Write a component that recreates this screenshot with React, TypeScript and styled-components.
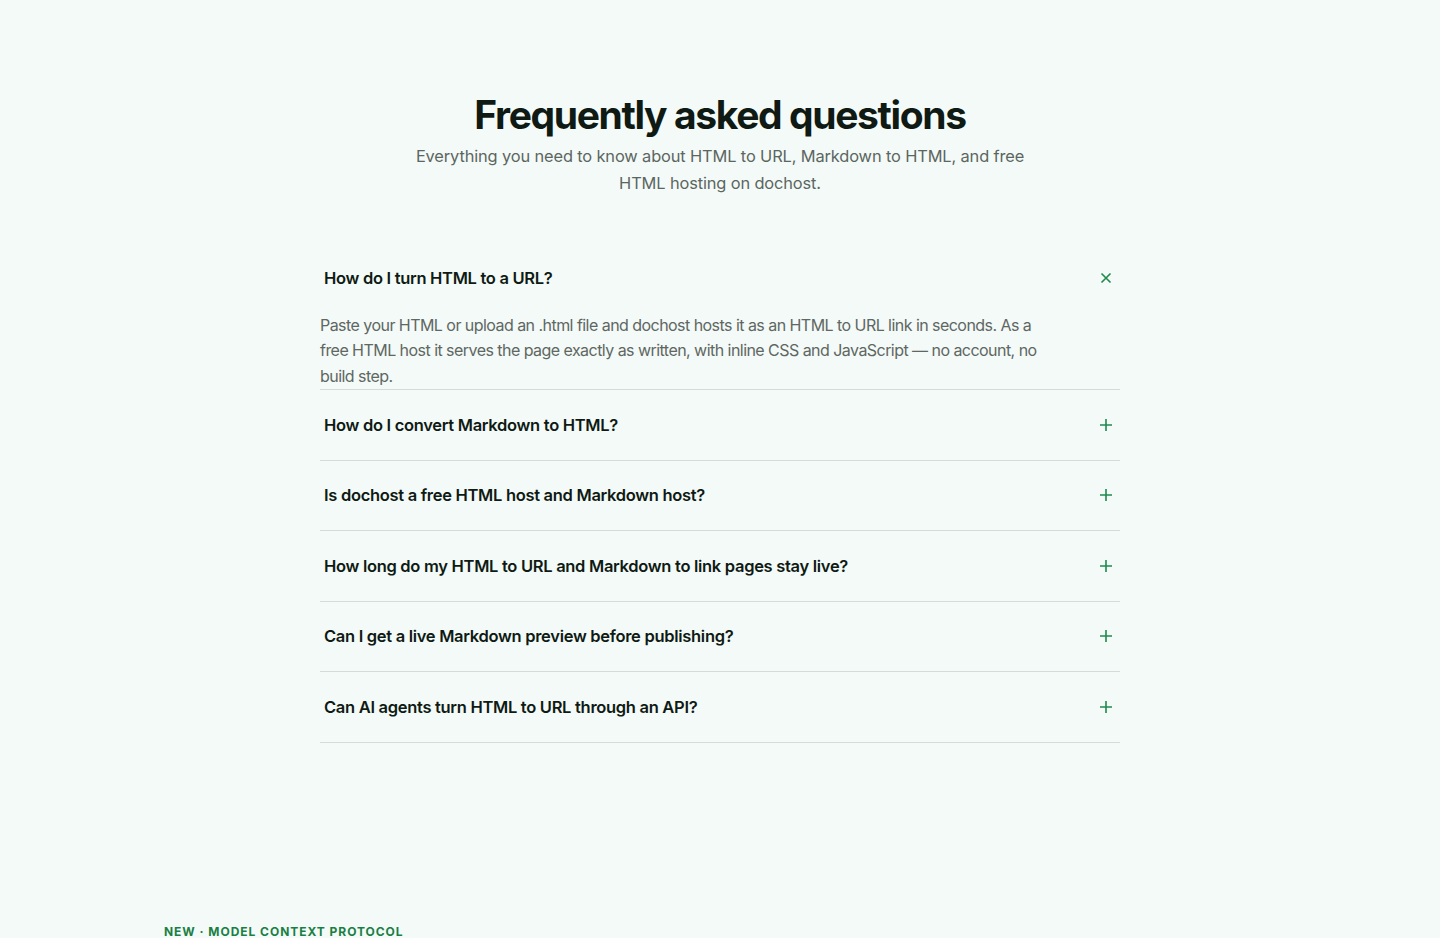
import React, { useState } from "react";
import styled, { createGlobalStyle } from "styled-components";

const GlobalStyle = createGlobalStyle`
  html, body {
    margin: 0;
    padding: 0;
    background: #f4faf8;
    font-family: Inter, "Noto Sans", sans-serif;
    color: #0f1a14;
    -webkit-font-smoothing: antialiased;
  }
  * { box-sizing: border-box; }
`;

const faqs = [
  {
    q: "How do I turn HTML to a URL?",
    a: "Paste your HTML or upload an .html file and dochost hosts it as an HTML to URL link in seconds. As a free HTML host it serves the page exactly as written, with inline CSS and JavaScript — no account, no build step.",
  },
  {
    q: "How do I convert Markdown to HTML?",
    a: "Paste Markdown and dochost renders it to clean HTML with headings, tables and code blocks, then publishes it at a shareable link.",
  },
  {
    q: "Is dochost a free HTML host and Markdown host?",
    a: "Yes. Publishing HTML and Markdown pages is free, with no account required.",
  },
  {
    q: "How long do my HTML to URL and Markdown to link pages stay live?",
    a: "Pages stay live for as long as you keep them. You can delete a page at any time.",
  },
  {
    q: "Can I get a live Markdown preview before publishing?",
    a: "Yes. The editor shows a live Markdown preview side by side as you type.",
  },
  {
    q: "Can AI agents turn HTML to URL through an API?",
    a: "Yes. dochost exposes an API and a Model Context Protocol server so agents can publish pages directly.",
  },
];

const Page = styled.main`
  display: flex;
  flex-direction: column;
`;

const Section = styled.section`
  padding: 92px 0 0;
  display: flex;
  flex-direction: column;
  align-items: center;
`;

const Title = styled.h2`
  margin: 0;
  font-size: 39px;
  line-height: 46px;
  font-weight: 700;
  letter-spacing: -0.035em;
  color: #0f1a14;
  text-align: center;
`;

const Subtitle = styled.p`
  margin: 5px 0 0;
  max-width: 630px;
  font-size: 16.4px;
  line-height: 27px;
  color: #5b6660;
  text-align: center;
  letter-spacing: -0.008em;
`;

const List = styled.div`
  width: 800px;
  margin-top: 46px;
  display: flex;
  flex-direction: column;
`;

const Item = styled.div`
  border-bottom: 1px solid #d5dcd8;
`;

const Question = styled.button`
  width: 100%;
  height: 69.5px;
  padding: 0 4px;
  display: flex;
  align-items: center;
  justify-content: space-between;
  background: none;
  border: 0;
  cursor: pointer;
  font-family: inherit;
  font-size: 16.5px;
  font-weight: 600;
  letter-spacing: -0.018em;
  color: #0f1a14;
  text-align: left;
`;

const Icon = styled.span`
  width: 20px;
  height: 20px;
  display: flex;
  align-items: center;
  justify-content: center;
  color: #1f8a4c;
`;

const Answer = styled.p`
  margin: 0;
  padding: 0;
  max-width: 725px;
  font-size: 16px;
  line-height: 25.5px;
  color: #5e6762;
  letter-spacing: -0.034em;
`;

const Next = styled.section`
  margin-top: 181px;
  padding: 0 0 40px 164px;
`;

const Eyebrow = styled.div`
  font-size: 12px;
  line-height: 16px;
  font-weight: 700;
  letter-spacing: 0.08em;
  color: #1a7f45;
  text-transform: uppercase;
`;

const PlusIcon = () => (
  <svg width="14" height="14" viewBox="0 0 14 14" fill="none" stroke="currentColor" strokeWidth="1.6">
    <path d="M7 1v12M1 7h12" />
  </svg>
);

const CloseIcon = () => (
  <svg width="12" height="12" viewBox="0 0 12 12" fill="none" stroke="currentColor" strokeWidth="1.6">
    <path d="M1.5 1.5l9 9M10.5 1.5l-9 9" />
  </svg>
);

export default function App() {
  const [open, setOpen] = useState<number | null>(0);

  return (
    <Page>
      <GlobalStyle />
      <Section>
        <Title>Frequently asked questions</Title>
        <Subtitle>
          Everything you need to know about HTML to URL, Markdown to HTML, and free HTML hosting on dochost.
        </Subtitle>
        <List>
          {faqs.map((f, i) => (
            <Item key={f.q}>
              <Question onClick={() => setOpen(open === i ? null : i)}>
                {f.q}
                <Icon>{open === i ? <CloseIcon /> : <PlusIcon />}</Icon>
              </Question>
              {open === i && <Answer>{f.a}</Answer>}
            </Item>
          ))}
        </List>
      </Section>
      <Next>
        <Eyebrow>New · Model Context Protocol</Eyebrow>
      </Next>
    </Page>
  );
}
